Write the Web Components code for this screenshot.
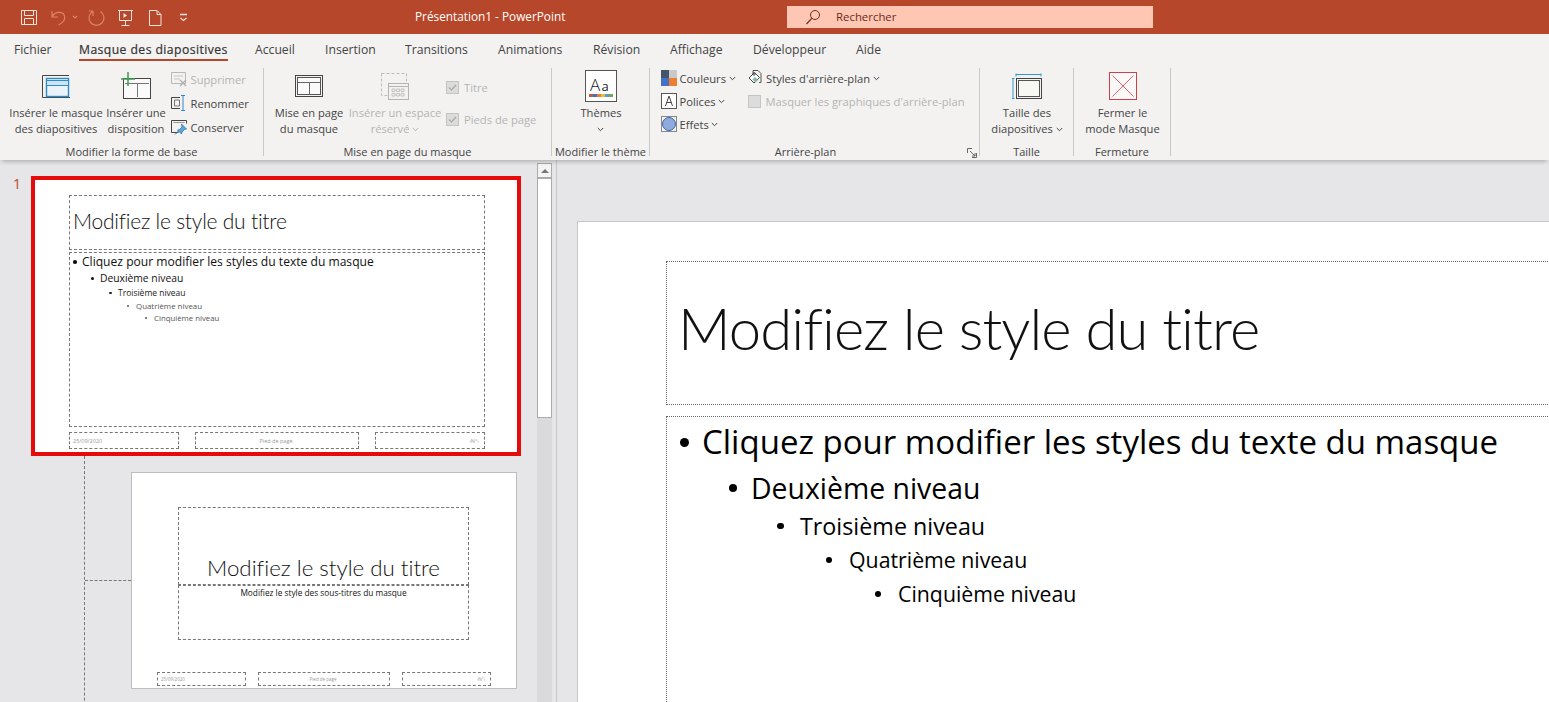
<!DOCTYPE html>
<html lang="fr"><head><meta charset="utf-8"><title>PowerPoint</title>
<style>
html,body{margin:0;padding:0;height:702px;overflow:hidden;background:#e6e6e8}
body{font-family:"Open Sans","Noto Sans",sans-serif;font-variant-ligatures:none}
svg{display:block}
</style></head><body>
<pp-app>
  <pp-titlebar title-text="Présentation1 - PowerPoint" search="Rechercher"></pp-titlebar>
  <pp-tabs>
    <pp-tab style="--w:37px;--g:14px">Fichier</pp-tab>
    <pp-tab active style="--w:149px;--g:28px">Masque des diapositives</pp-tab>
    <pp-tab style="--w:41px;--g:27px">Accueil</pp-tab>
    <pp-tab style="--w:50px;--g:29px">Insertion</pp-tab>
    <pp-tab style="--w:62px;--g:30px">Transitions</pp-tab>
    <pp-tab style="--w:64px;--g:31px">Animations</pp-tab>
    <pp-tab style="--w:48px;--g:31px">Révision</pp-tab>
    <pp-tab style="--w:52px;--g:29px">Affichage</pp-tab>
    <pp-tab style="--w:75px;--g:31px">Développeur</pp-tab>
    <pp-tab style="--w:26px;--g:28px">Aide</pp-tab>
  </pp-tabs>
  <pp-ribbon>
    <pp-group label="Modifier la forme de base" style="--w:264px;--pl:8px">
      <pp-big style="--w:96px">
        <svg slot="icon" width="30" height="26" viewBox="0 0 30 26"><path d="M1.500 24.500V2.500H28M1.500 24.500H29" fill="none" stroke="#444"/><rect x="5.500" y="5.500" width="22" height="18" fill="#eaf3fa" stroke="#2e8bc9" stroke-width="1.400"/><rect x="5.500" y="7.500" width="22" height="5" fill="#cfe4f3" stroke="#2e8bc9"/></svg>
        Insérer le masque<br>des diapositives
      </pp-big>
      <pp-big style="--w:60px;--ml:2px">
        <svg slot="icon" width="32" height="28" viewBox="0 0 32 28"><rect x="3.500" y="6.500" width="27" height="20" fill="#fafafa" stroke="#444"/><path d="M5 11.500H29M17.500 11.500V25" stroke="#777" fill="none"/><path d="M8 0v14M1 7h14" stroke="#3d9a52" stroke-width="1.500"/></svg>
        Insérer une<br>disposition
      </pp-big>
      <pp-col style="--ml:5px;--gap:6px;--pt:2px">
        <pp-small disabled><svg slot="icon" width="17" height="18" viewBox="0 0 17 18"><path d="M.500 2.500h14v11H.500z" fill="none" stroke="#b8b8b8"/><path d="M3 6h9M3 9h6" stroke="#c4c4c4"/><path d="M9 10l6 6M15 10l-6 6" stroke="#b0b0b0" stroke-width="1.300"/></svg>Supprimer</pp-small>
        <pp-small><svg slot="icon" width="17" height="18" viewBox="0 0 17 18"><path d="M9 3.500H.500v11H9" fill="none" stroke="#444"/><path d="M3.500 6h5v6h-5z" fill="none" stroke="#777"/><path d="M10 1.500h4M10 16.500h4M12 2v14" stroke="#2e8bc9" fill="none"/></svg>Renommer</pp-small>
        <pp-small><svg slot="icon" width="17" height="18" viewBox="0 0 17 18"><path d="M.500 2.500h15v3M.500 2.500v12h7" fill="none" stroke="#444"/><path d="M2.500 4.500h11" stroke="#999"/><path d="M10.500 6l5 5-2 .5-2.500 2.500-.5 2-4-4 2-.5L11 9z" fill="#5aa7dc" stroke="#2468a8" stroke-width=".7"/><path d="M7.500 13L4 16.500" stroke="#2468a8"/></svg>Conserver</pp-small>
      </pp-col>
    </pp-group>
    <pp-group label="Mise en page du masque" style="--w:288px;--pl:9px">
      <pp-big style="--w:72px">
        <svg slot="icon" width="28" height="23" viewBox="0 0 28 23"><rect x=".500" y=".500" width="27" height="21" fill="none" stroke="#444"/><rect x="2.500" y="2.500" width="23" height="17" fill="#fafafa" stroke="#555"/><path d="M3 7.500h22M14.500 8v11" stroke="#666" fill="none"/></svg>
        Mise en page<br>du masque
      </pp-big>
      <pp-big disabled style="--w:96px;--ml:2px">
        <svg slot="icon" width="30" height="29" viewBox="0 0 30 29"><path d="M1.500 1.500h25v10M1.500 1.500v22h6" fill="none" stroke="#bcbcbc" stroke-dasharray="3 2"/><rect x="8.500" y="11.500" width="20" height="16" fill="#f3f2f1" stroke="#b4b4b4"/><path d="M8.500 14.500h20" stroke="#b4b4b4"/><path d="M12 17h3v2.500h-3zM16.500 17h3v2.500h-3zM21 17h3v2.500h-3zM12 21.500h3V24h-3zM16.500 21.500h3V24h-3zM21 21.500h3V24h-3z" fill="none" stroke="#b8b8b8" stroke-width=".8"/></svg>
        Insérer un espace<br>réservé <pp-chev></pp-chev>
      </pp-big>
      <pp-col style="--ml:3px;--gap:14px;--pt:10px">
        <pp-check checked disabled>Titre</pp-check>
        <pp-check checked disabled>Pieds de page</pp-check>
      </pp-col>
    </pp-group>
    <pp-group label="Modifier le thème" style="--w:98px;--pl:17px">
      <pp-big style="--w:64px">
        <svg slot="icon" width="32" height="32" viewBox="0 0 32 32"><rect x=".500" y=".500" width="31" height="31" fill="#fff" stroke="#555"/><text x="5" y="21" font-family="Open Sans,sans-serif" font-size="17" font-weight="300" fill="#222">A</text><text x="16.500" y="21" font-family="Open Sans,sans-serif" font-size="13" fill="#222">a</text><rect x="4" y="24" width="4" height="3" fill="#c55a3a"/><rect x="8" y="24" width="4" height="3" fill="#4472c4"/><rect x="12" y="24" width="4" height="3" fill="#ed7d31"/><rect x="16" y="24" width="4" height="3" fill="#e6c032"/><rect x="20" y="24" width="4" height="3" fill="#5b9bd5"/><rect x="24" y="24" width="4" height="3" fill="#70ad47"/></svg>
        Thèmes<br><pp-chev></pp-chev>
      </pp-big>
    </pp-group>
    <pp-group label="Arrière-plan" launcher style="--w:330px;--pl:11px;--lpr:18px">
      <pp-col style="--gap:5px;--pt:1px">
        <pp-small><svg slot="icon" width="16" height="18" viewBox="0 0 16 18"><rect y="1" width="8" height="8" fill="#44546a"/><rect x="8" y="1" width="8" height="8" fill="#c9c9c9"/><rect y="9" width="8" height="8" fill="#4472c4"/><rect x="8" y="9" width="8" height="8" fill="#ed7d31"/></svg>Couleurs<pp-chev></pp-chev></pp-small>
        <pp-small><svg slot="icon" width="16" height="18" viewBox="0 0 16 18"><rect x=".500" y="1.500" width="15" height="15" fill="#fff" stroke="#555"/><path d="M4.500 14L8 4l3.500 10M5.700 10.500h4.600" fill="none" stroke="#444"/></svg>Polices<pp-chev></pp-chev></pp-small>
        <pp-small><svg slot="icon" width="16" height="18" viewBox="0 0 16 18"><rect x=".500" y="1.500" width="15" height="15" fill="#f3f2f1" stroke="#888"/><circle cx="8" cy="9" r="6.500" fill="#8faadc" stroke="#3e63a8"/></svg>Effets<pp-chev></pp-chev></pp-small>
      </pp-col>
      <pp-col style="--ml:12px;--gap:5px;--pt:1px">
        <pp-small><svg slot="icon" width="16" height="18" viewBox="0 0 16 18"><path d="M5 4.500V1.500h5l3 3v9H11" fill="none" stroke="#555"/><path d="M1 9l5.500-5.500 5 5-5.500 5.500z" fill="#fff" stroke="#444"/><path d="M7 8l3 3-2.500 2.500-3-3z" fill="#7fb6a8"/><circle cx="6" cy="5" r="1.200" fill="none" stroke="#444"/></svg>Styles d'arrière-plan<pp-chev></pp-chev></pp-small>
        <pp-check disabled>Masquer les graphiques d'arrière-plan</pp-check>
      </pp-col>
    </pp-group>
    <pp-group label="Taille" style="--w:94px;--pl:1px">
      <pp-big style="--w:92px">
        <svg slot="icon" width="30" height="27" viewBox="0 0 30 27"><path d="M4 .5v3M4 1.500h25M29 .5v3M1 5v21M0 5.500h2.500M0 25.500h2.500" fill="none" stroke="#2e9bd6"/><rect x="4.500" y="5.500" width="25" height="20" fill="none" stroke="#444"/><rect x="6.500" y="7.500" width="21" height="16" fill="#f8f8f2" stroke="#555"/></svg>
        Taille des<br>diapositives <pp-chev></pp-chev>
      </pp-big>
    </pp-group>
    <pp-group label="Fermeture" style="--w:97px;--pl:1px">
      <pp-big style="--w:95px">
        <svg slot="icon" width="28" height="28" viewBox="0 0 28 28"><rect x=".500" y=".500" width="27" height="27" fill="#faf8f8" stroke="#c8414b"/><path d="M3.500 3.500l21 21M24.500 3.500l-21 21" stroke="#e8606a"/></svg>
        Fermer le<br>mode Masque
      </pp-big>
    </pp-group>
  </pp-ribbon>
  <pp-work>
    <pp-thumbs slot="thumbs">
      <pp-thumb1>
        <pp-ph slot="title" style="--h:55px;--bd:1px dashed #777;--jcol:center;--pl:3px;--pb:4px">Modifiez le style du titre</pp-ph>
        <pp-ph slot="body" style="--h:175px;--bd:1px dashed #777">
          <pp-lv style="--ml:3px;--bw:9px;--fs:12.100px;--lh:16px;--mt:1px;--c:#111;--dot:3.500px">Cliquez pour modifier les styles du texte du masque</pp-lv>
          <pp-lv style="--ml:21px;--bw:9px;--fs:10.300px;--lh:14px;--mt:1px;--c:#111;--dot:3px">Deuxième niveau</pp-lv>
          <pp-lv style="--ml:39px;--bw:9px;--fs:8.500px;--lh:12px;--mt:2px;--c:#222;--dot:2.500px">Troisième niveau</pp-lv>
          <pp-lv style="--ml:57px;--bw:9px;--fs:7.900px;--lh:12px;--mt:1px;--c:#555;--dot:2px">Quatrième niveau</pp-lv>
          <pp-lv style="--ml:75px;--bw:9px;--fs:7.800px;--lh:12px;--mt:0px;--c:#555;--dot:2px">Cinquième niveau</pp-lv>
        </pp-ph>
        <pp-foot slot="foot" style="--sizes:110px 164px 110px;--gap:16px;--h:17px;--fs:5.500px" date="25/09/2020" mid="Pied de page" num="‹N°›"></pp-foot>
      </pp-thumb1>
      <pp-tree>
        <pp-thumb2>
          <pp-ph slot="title" style="--h:78px;--bd:1px dashed #777;--jcol:flex-end">Modifiez le style du titre</pp-ph>
          <pp-ph slot="sub" style="--h:55px;--bd:1px dashed #777">Modifiez le style des sous-titres du masque</pp-ph>
          <pp-foot slot="foot" style="--sizes:89px 132px 89px;--gap:12px;--h:14px;--fs:4.500px" date="25/09/2020" mid="Pied de page" num="‹N°›"></pp-foot>
        </pp-thumb2>
      </pp-tree>
    </pp-thumbs>
    <pp-scroll slot="scroll"></pp-scroll>
    <pp-slide slot="main">
      <pp-ph slot="title" style="--h:144px;--bd:1px dotted #666;--jcol:center;--pl:11px;--pb:12px"><span style="font-size:58px;letter-spacing:-.95px;font-family:Lato,sans-serif;font-weight:300;color:#111">Modifiez le style du titre</span></pp-ph>
      <pp-ph slot="body" style="--h:400px;--bd:1px dotted #666">
        <pp-lv style="--ml:13px;--bw:22px;--fs:33px;--lh:40px;--mt:5px;--c:#000;--dot:9px">Cliquez pour modifier les styles du texte du masque</pp-lv>
        <pp-lv style="--ml:62px;--bw:22px;--fs:28.400px;--lh:36px;--mt:8px;--c:#000;--dot:8px">Deuxième niveau</pp-lv>
        <pp-lv style="--ml:110px;--bw:23px;--fs:23.300px;--lh:30px;--mt:5px;--c:#000;--dot:6.500px">Troisième niveau</pp-lv>
        <pp-lv style="--ml:159px;--bw:23px;--fs:21.300px;--lh:30px;--mt:4px;--c:#000;--dot:6px">Quatrième niveau</pp-lv>
        <pp-lv style="--ml:208px;--bw:23px;--fs:21.300px;--lh:30px;--mt:4px;--c:#000;--dot:6px">Cinquième niveau</pp-lv>
      </pp-ph>
    </pp-slide>
  </pp-work>
</pp-app>
<script>
const def=(name,html)=>customElements.define(name,class extends HTMLElement{
  constructor(){super();this.attachShadow({mode:'open'}).innerHTML=html;}
});
def('pp-app',`<style>:host{display:flex;flex-direction:column;width:1549px;height:702px;overflow:hidden}</style><slot></slot>`);

customElements.define('pp-titlebar',class extends HTMLElement{
  constructor(){super();this.attachShadow({mode:'open'});}
  connectedCallback(){
    this.shadowRoot.innerHTML=`<style>
    :host{display:flex;align-items:center;height:34px;background:#b7472a;color:#fff;font-size:11.800px;flex:none}
    .qat{display:flex;align-items:center;width:415px;padding-left:20px;box-sizing:border-box}
    .qat svg{margin-top:2px}
    .name{width:372px;white-space:pre;margin-top:-2px}
    .search{width:366px;height:22px;background:#fdc7b4;display:flex;align-items:center;color:#6f2b18;box-sizing:border-box;padding-left:18px;font-size:11.400px}
    .search svg{margin-right:15px}
    .search span{margin-top:-1px}
    </style>
    <div class="qat">
      <svg width="180" height="20" viewBox="0 0 180 20">
        <g fill="none" stroke="#f6e3dc">
          <path d="M1.500 2.500h15v14H1.500z"/><path d="M4.500 2.500v5h9v-5M4.500 16.500v-6h9v6"/>
        </g>
        <g fill="none" stroke="#d9846b" stroke-width="1.200">
          <path d="M32 3v6h6M32.500 8.500C35 3 43 3 44.500 8c1 4-2 7-6 9"/>
          <path d="M53 8l2 2 2-2"/>
          <path d="M72.500 3.500A7.500 7.500 0 1 0 80.500 3.500M73 3v5M73 3h-4"/>
        </g>
        <g fill="none" stroke="#f6e3dc">
          <path d="M98 2.500h15M99.500 2.500v10h12v-10M105.500 12.500v5M101.500 17.500h8"/>
          <path d="M103.500 5l3.500 2.500-3.500 2.500z" fill="#f6e3dc" stroke="none"/>
          <path d="M129.500 2.500h7.500l4 4v11h-11.500zM137 2.500v4h4"/>
          <path d="M160 6.500h7M160.500 10l3 2.500 3-2.500" stroke-width="1.300"/>
        </g>
      </svg>
    </div>
    <div class="name">${this.getAttribute('title-text')}</div>
    <div class="search"><svg width="16" height="16" viewBox="0 0 16 16" fill="none" stroke="#6f2b18"><circle cx="10" cy="6" r="4.500"/><path d="M6.800 9.300L1.500 15" stroke-width="1.200"/></svg><span>${this.getAttribute('search')}</span></div>`;
  }
});

def('pp-tabs',`<style>:host{display:flex;height:32px;background:#f3f2f1;flex:none}</style><slot></slot>`);
def('pp-tab',`<style>:host{display:block;margin-left:var(--g);width:var(--w);height:27px;font-size:12.200px;line-height:31px;color:#444;white-space:nowrap;box-sizing:border-box}
:host([active]){border-bottom:2px solid #b7472a;letter-spacing:.035em;color:#333;-webkit-text-stroke:.2px #333}</style><slot></slot>`);

def('pp-ribbon',`<style>:host{display:flex;height:94px;background:#f3f2f1;flex:none;box-shadow:0 4px 4px -2px rgba(0,0,0,.22);position:relative;z-index:2}</style><slot></slot>`);

customElements.define('pp-group',class extends HTMLElement{
  constructor(){super();this.attachShadow({mode:'open'});}
  connectedCallback(){
    const launcher=this.hasAttribute('launcher')?`<svg class="l" width="10" height="10" viewBox="0 0 10 10" fill="none" stroke="#666"><path d="M.5 5V.5H5M9.500 5v4.500H5M3 3l5 5M8 5v3H5"/></svg>`:'';
    this.shadowRoot.innerHTML=`<style>
    :host{display:flex;flex-direction:column;width:var(--w);height:88px;margin-top:2px;box-sizing:border-box;border-right:1px solid #c8c8c8;flex:none;font-size:11.200px;color:#444}
    .c{flex:1;display:flex;align-items:flex-start;padding-left:var(--pl);min-height:0}
    .b{height:16px;line-height:16px;margin-bottom:-4px;padding-right:var(--lpr,0);text-align:center;font-size:11px;display:flex;justify-content:center;white-space:nowrap;position:relative}
    .l{position:absolute;right:2px;top:4px}
    </style><div class="c"><slot></slot></div><div class="b"><span>${this.getAttribute('label')}</span>${launcher}</div>`;
  }
});

def('pp-big',`<style>:host{display:flex;flex-direction:column;align-items:center;width:var(--w);margin-left:var(--ml,0);flex:none;text-align:center;font-size:11.150px;line-height:16px;color:#444;white-space:nowrap}
:host([disabled]){color:#b4b4b4}
.i{height:32px;display:flex;align-items:center;justify-content:center;margin-top:2px;margin-bottom:3px}</style>
<div class="i"><slot name="icon"></slot></div><div><slot></slot></div>`);

def('pp-col',`<style>:host{display:flex;flex-direction:column;gap:var(--gap);margin-left:var(--ml,0);padding-top:var(--pt,0);flex:none}</style><slot></slot>`);

def('pp-small',`<style>:host{display:flex;align-items:center;height:18px;font-size:11.200px;color:#444;white-space:nowrap;gap:2.500px}
:host([disabled]){color:#b4b4b4}
</style><slot name="icon"></slot><slot></slot>`);

def('pp-chev',`<style>:host{display:inline-block;line-height:0;vertical-align:1px}svg{display:inline-block}</style><svg width="7" height="5" viewBox="0 0 7 5" fill="none" stroke="currentColor"><path d="M.8 1l2.700 2.700L6.200 1"/></svg>`);

customElements.define('pp-check',class extends HTMLElement{
  constructor(){super();this.attachShadow({mode:'open'});}
  connectedCallback(){
    const mark=this.hasAttribute('checked')?`<path d="M3 6.500l2.500 2.500L10 4" fill="none" stroke="#a8a8a8" stroke-width="1.200"/>`:'';
    this.shadowRoot.innerHTML=`<style>:host{display:flex;align-items:center;height:18px;font-size:11.200px;color:#b4b4b4;white-space:nowrap;gap:5px}</style>
    <svg width="13" height="13" viewBox="0 0 13 13"><rect x=".5" y=".5" width="12" height="12" fill="#dcdcdc" stroke="#c4c4c4"/>${mark}</svg><slot></slot>`;
  }
});

def('pp-work',`<style>:host{display:grid;grid-template-columns:537px 15px 5px 1fr;flex:1;min-height:0;background:#e6e6e8}
.div{border-right:1px solid #c9c9cb}
.main{overflow:hidden;min-width:0}
.t{overflow:hidden;min-width:0}
</style><div class="t"><slot name="thumbs"></slot></div><slot name="scroll"></slot><div class="div"></div><div class="main"><slot name="main"></slot></div>`);

def('pp-thumbs',`<style>:host{display:block;padding-top:16px;position:relative}
.n{position:absolute;left:13px;top:14px;font-size:14px;color:#b7472a;line-height:20px}</style><div class="n">1</div><slot></slot>`);

def('pp-thumb1',`<style>:host{display:block;margin-left:31px;width:490px;height:280px;border:4px solid #e60b0b;box-sizing:border-box;background:#fff;padding:15px 32px 0 34px}
.f{margin-top:5px}.b{margin-top:2px}
slot[name=title]::slotted(*){font-family:Lato,sans-serif;font-weight:300;font-size:21px;letter-spacing:-.22px;color:#111}
</style><slot name="title"></slot><div class="b"><slot name="body"></slot></div><div class="f"><slot name="foot"></slot></div>`);

def('pp-tree',`<style>:host{display:flex;align-items:flex-start;margin-left:84px;border-left:1px dashed #777;padding-top:16px;height:300px;box-sizing:border-box}
.arm{width:46px;border-top:1px dashed #777;margin-top:108px;flex:none}</style><div class="arm"></div><slot></slot>`);

def('pp-thumb2',`<style>:host{display:block;width:386px;height:217px;box-sizing:border-box;background:#fff;border:1px solid #bdbdbf;padding:34px 0 0 46px;flex:none}
slot[name=title]::slotted(*){font-family:Lato,sans-serif;font-weight:300;font-size:22.300px;color:#111;width:291px;line-height:28px;--pb:2px;text-align:center}
slot[name=sub]::slotted(*){font-size:8.300px;color:#111;width:291px;--pt:1px;line-height:12px;text-align:center}
.f{margin:32px 0 0 -21px}
</style><slot name="title"></slot><slot name="sub"></slot><div class="f"><slot name="foot"></slot></div>`);

def('pp-ph',`<style>:host{display:flex;flex-direction:column;justify-content:var(--jcol,flex-start);box-sizing:border-box;height:var(--h);border:var(--bd);padding-left:var(--pl,0);padding-top:var(--pt,0);padding-bottom:var(--pb,0)}</style><slot></slot>`);

customElements.define('pp-foot',class extends HTMLElement{
  constructor(){super();this.attachShadow({mode:'open'});}
  connectedCallback(){
    this.shadowRoot.innerHTML=`<style>:host{display:grid;grid-template-columns:var(--sizes);gap:var(--gap);font-size:var(--fs);color:#999}
    div{height:var(--h);border:1px dashed #777;box-sizing:border-box;display:flex;align-items:center;padding:0 5px 0 3px;white-space:nowrap}
    .m{justify-content:center}.r{justify-content:flex-end}</style>
    <div>${this.getAttribute('date')}</div><div class="m">${this.getAttribute('mid')}</div><div class="r">${this.getAttribute('num')}</div>`;
  }
});

def('pp-lv',`<style>:host{display:flex;align-items:center;margin-left:var(--ml);margin-top:var(--mt);font-size:var(--fs);line-height:var(--lh);color:var(--c);white-space:nowrap;font-family:"Open Sans",sans-serif;font-weight:400}
.b{width:var(--bw);flex:none;display:flex;align-items:center}
.b i{display:block;width:var(--dot,3px);height:var(--dot,3px);border-radius:50%;background:currentColor}</style><span class="b"><i></i></span><slot></slot>`);

def('pp-scroll',`<style>:host{display:flex;flex-direction:column;background:#dadadc;padding-top:3px;background-clip:content-box;height:100%;box-sizing:border-box}
.up{background:#f4f4f4;border:1px solid #ababab;box-sizing:border-box;height:15px;display:flex;align-items:center;justify-content:center}
.up i{display:block;width:0;height:0;border:4px solid transparent;border-top:0;border-bottom:4px solid #777}
.th{height:240px;background:#fff;border:1px solid #ababab;box-sizing:border-box}
</style><div class="up"><i></i></div><div class="th"></div>`);

def('pp-slide',`<style>:host{display:block;margin:61px 0 0 20px;width:1200px;height:700px;box-sizing:border-box;background:#fff;border:1px solid #c6c6c8;padding:39px 0 0 88px}
.b{margin-top:11px}
</style><slot name="title"></slot><div class="b"><slot name="body"></slot></div>`);
</script>
</body></html>
